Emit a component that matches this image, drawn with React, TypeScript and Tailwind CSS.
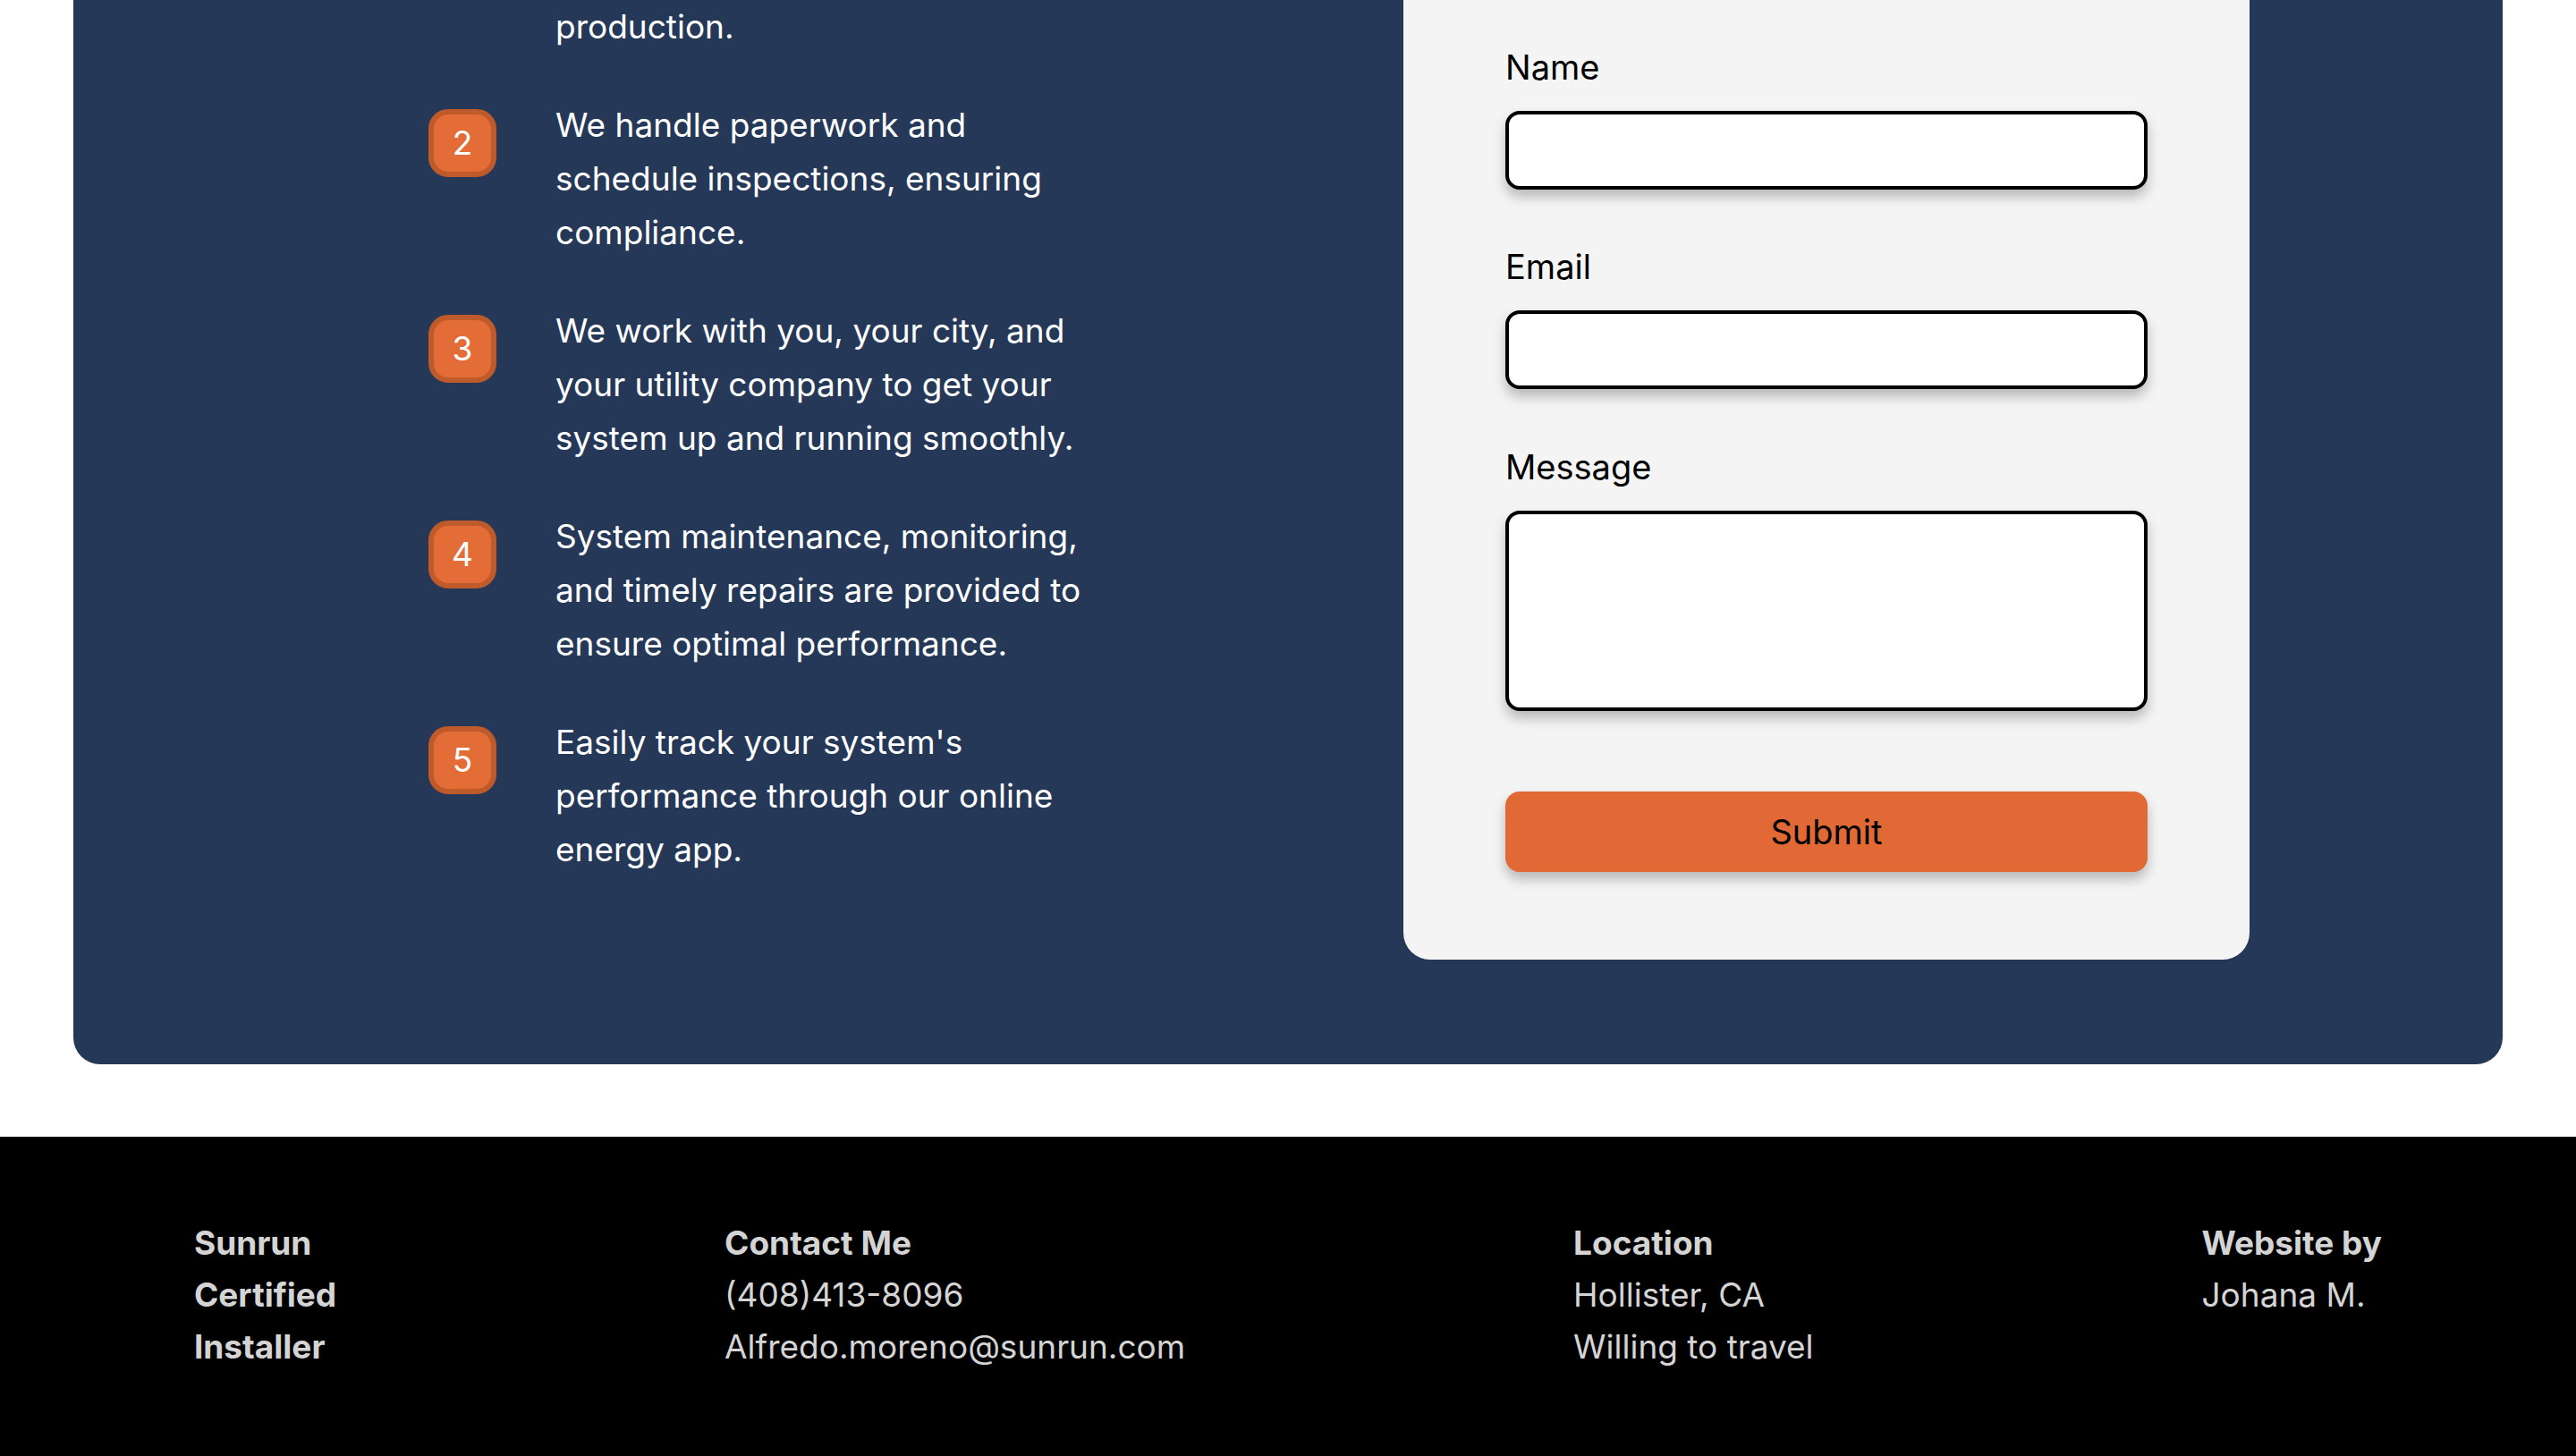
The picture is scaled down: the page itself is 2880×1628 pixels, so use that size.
import React from 'react';

const steps = [
  {
    n: 1,
    text: (
      <>
        We design a custom solar system built to maximize your energy
        <br />
        production.
      </>
    ),
  },
  { n: 2, text: 'We handle paperwork and schedule inspections, ensuring compliance.' },
  { n: 3, text: 'We work with you, your city, and your utility company to get your system up and running smoothly.' },
  { n: 4, text: 'System maintenance, monitoring, and timely repairs are provided to ensure optimal performance.' },
  { n: 5, text: "Easily track your system's performance through our online energy app." },
];

const Field = ({ label, area }: { label: string; area?: boolean }) => (
  <div className="flex flex-col">
    <label className="text-[38px] leading-[54px] text-black mb-[22px]">{label}</label>
    {area ? (
      <textarea className="h-[224px] w-full rounded-[16px] border-4 border-black bg-white shadow-[0_8px_14px_rgba(0,0,0,0.25)] resize-none" />
    ) : (
      <input className="h-[88px] w-full rounded-[16px] border-4 border-black bg-white shadow-[0_8px_14px_rgba(0,0,0,0.25)]" />
    )}
  </div>
);

export default function App() {
  return (
    <div className="min-h-screen bg-black font-['Inter',sans-serif] overflow-hidden">
      <div className="bg-white">
        <div className="-mt-[200px] px-[82px] pb-[81px]">
          <section className="flex rounded-[30px] bg-[#253858] pt-[78px] pb-[117px] pl-[397px] pr-[283px]">
            {/* steps */}
            <ol className="self-end mb-[93px] flex flex-col gap-[50px]">
              {steps.map((s) => (
                <li key={s.n} className="flex gap-[66px]">
                  <div className="mt-[12px] flex h-[76px] w-[76px] shrink-0 items-center justify-center rounded-[22px] border-[6px] border-[#bf5a2b] bg-[#e36c37] text-[37px] text-white">
                    {s.n}
                  </div>
                  <p className="w-[600px] text-[37px] leading-[60px] text-white">{s.text}</p>
                </li>
              ))}
            </ol>

            {/* contact form */}
            <form className="ml-auto mt-[72px] flex w-[946px] flex-col rounded-[30px] bg-[#f4f4f4] px-[114px] pt-[98px] pb-[98px]">
              <Field label="Name" />
              <div className="mt-[59px]">
                <Field label="Email" />
              </div>
              <div className="mt-[60px]">
                <Field label="Message" area />
              </div>
              <button
                type="button"
                className="mt-[90px] h-[90px] w-full rounded-[16px] bg-[#e06936] text-[38px] text-black shadow-[0_8px_14px_rgba(0,0,0,0.25)]"
              >
                Submit
              </button>
            </form>
          </section>
        </div>
      </div>

      <footer className="flex justify-around bg-black pt-[90px] pb-[96px] text-[37px] leading-[58px] text-[#d4d4d4]">
        <div className="w-min font-bold">Sunrun Certified Installer</div>
        <div className="flex flex-col">
          <span className="font-bold">Contact Me</span>
          <span>(408)413-8096</span>
          <span>Alfredo.moreno@sunrun.com</span>
        </div>
        <div className="flex flex-col">
          <span className="font-bold">Location</span>
          <span>Hollister, CA</span>
          <span>Willing to travel</span>
        </div>
        <div className="flex flex-col">
          <span className="font-bold">Website by</span>
          <span>Johana M.</span>
        </div>
      </footer>
    </div>
  );
}
